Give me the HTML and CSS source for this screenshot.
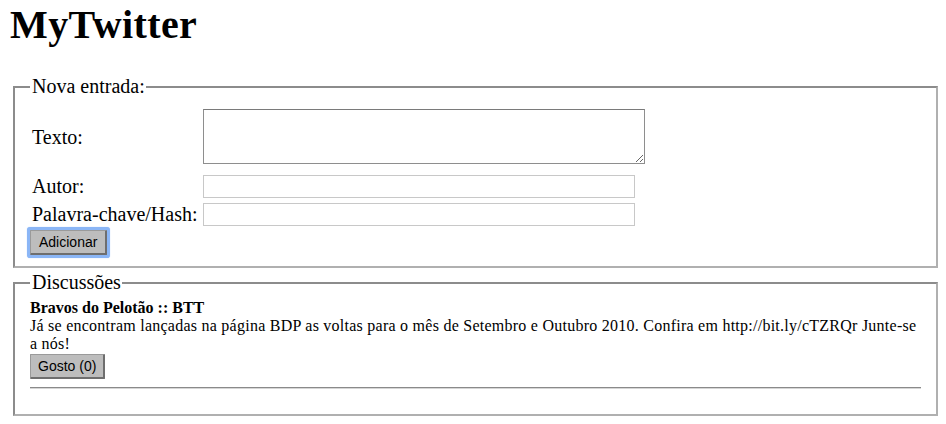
FILE: index.html
```html
<!DOCTYPE html>
<html lang="pt">
<head>
<meta charset="utf-8">
<title>MyTwitter</title>
<link rel="stylesheet" href="styles.css">
</head>
<body>
<h1 class="title">MyTwitter</h1>
<form class="entry-form">
  <fieldset class="panel panel-form">
    <legend class="panel-legend">Nova entrada:</legend>
    <div class="form-grid">
      <label class="form-label label-text" for="texto">Texto:</label>
      <div class="form-field field-text"><textarea id="texto" class="field-area"></textarea></div>
      <label class="form-label label-autor" for="autor">Autor:</label>
      <div class="form-field field-autor"><input id="autor" class="field-input" type="text"></div>
      <label class="form-label label-hash" for="hash">Palavra-chave/Hash:</label>
      <div class="form-field field-hash"><input id="hash" class="field-input" type="text"></div>
    </div>
    <div class="form-actions"><button type="button" class="btn btn-focused">Adicionar</button></div>
  </fieldset>
</form>
<fieldset class="panel panel-list">
  <legend class="panel-legend">Discussões</legend>
  <div class="post">
    <div class="post-title">Bravos do Pelotão :: BTT</div>
    <div class="post-body">Já se encontram lançadas na página BDP as voltas para o mês de Setembro e Outubro 2010. Confira em http://bit.ly/cTZRQr Junte-se a nós!</div>
    <div class="post-actions"><button type="button" class="btn btn-like">Gosto (0)</button></div>
    <hr class="post-rule">
  </div>
</fieldset>
</body>
</html>
```
FILE: styles.css
```css
html, body {
  background: #ffffff;
}
body {
  margin: 2px 8px 8px 8px;
  font-family: "Liberation Serif", "Times New Roman", serif;
  font-size: 16px;
  color: #000;
}
.title {
  margin: 0 0 27px 0;
  padding-left: 2px;
  font-size: 40px;
  line-height: 46px;
  font-weight: bold;
  letter-spacing: 0.4px;
}
.entry-form {
  margin: 0;
}
.panel {
  margin: 0 0 0 5px;
  border-width: 2px;
  border-style: solid;
  border-color: #8c8c8c #b0b0b0 #b0b0b0 #8c8c8c;
  padding: 7px 15px 11px 15px;
  font-size: 20px;
}
.panel-list {
  margin-top: 3px;
  padding-top: 5px;
  padding-bottom: 17px;
}
.panel-legend {
  padding: 0 1px 0 2px;
  font-size: 20px;
  line-height: 23px;
}
.form-grid {
  display: grid;
  grid-template-columns: 171px auto;
  align-items: center;
  padding: 4px 0 0 2px;
  row-gap: 0;
}
.form-label {
  font-size: 20px;
  line-height: 23px;
}
.label-text {
  padding-bottom: 10px;
}
.field-text {
  padding-bottom: 11px;
}
.field-autor {
  padding-bottom: 5px;
}
.label-autor {
  padding-bottom: 5px;
}
.form-field {
  display: flex;
}
.field-area {
  display: block;
  box-sizing: border-box;
  width: 442px;
  height: 55px;
  margin: 0;
  border: 1px solid #8e8e8e;
  border-top-color: #7a7a7a;
  background: #fff;
  padding: 2px;
  font: 13px "Liberation Mono", monospace;
}
.field-input {
  display: block;
  box-sizing: border-box;
  width: 432px;
  height: 23px;
  margin: 0;
  border: 1px solid #c8c8c8;
  background: #fff;
  padding: 1px 2px;
  font: 13px "Liberation Sans", Arial, sans-serif;
}
.form-actions {
  display: flex;
  padding-top: 4px;
}
.btn {
  box-sizing: border-box;
  height: 25px;
  padding: 0 7px;
  margin: 0;
  background: #bdbdbd;
  border: 1px solid #9a9a9a;
  border-right: 2px solid #6e6e6e;
  border-bottom: 2px solid #6e6e6e;
  border-radius: 1px;
  font: 14px "Liberation Sans", Arial, sans-serif;
  color: #000;
}
.btn-focused {
  padding: 0 8px;
  box-shadow: 0 0 0 3px #8bb6f6, 0 0 1px 3px #9cc2f8;
}
.post {
  font-size: 16px;
  line-height: 18px;
}
.post-title {
  font-weight: bold;
}
.post-body {
  margin: 0;
  letter-spacing: 0.25px;
}
.post-actions {
  display: flex;
  padding-top: 1px;
}
.post-rule {
  margin: 8px 0;
  border: 0;
  border-top: 1px solid #8a8a8a;
  border-bottom: 1px solid #d6d6d6;
  height: 0;
}
```
